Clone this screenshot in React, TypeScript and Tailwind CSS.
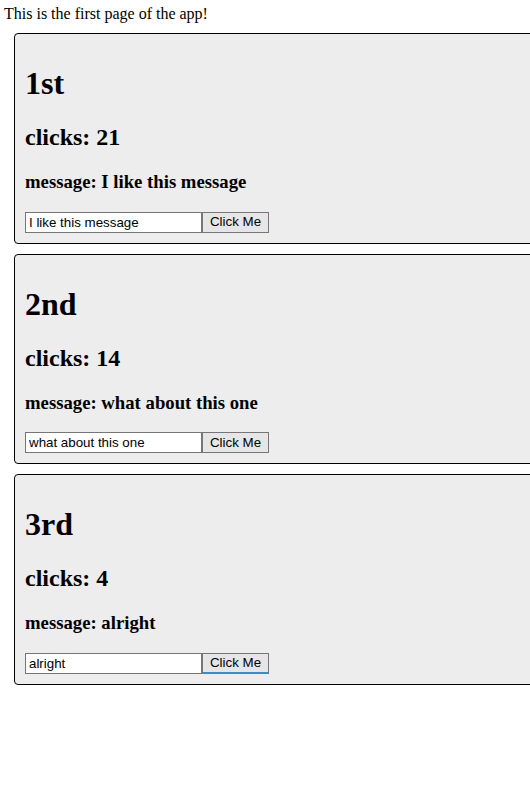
import { useState } from "react";

type Item = { title: string; clicks: number; message: string; focused?: boolean };

const items: Item[] = [
  { title: "1st", clicks: 21, message: "I like this message" },
  { title: "2nd", clicks: 14, message: "what about this one" },
  { title: "3rd", clicks: 4, message: "alright", focused: true },
];

const Card = ({ item }: { item: Item }) => {
  const [clicks, setClicks] = useState(item.clicks);
  const [text, setText] = useState(item.message);
  const [message, setMessage] = useState(item.message);

  return (
    <div className="ml-[10px] mt-[10px] w-[540px] p-[10px] border border-black rounded-[4px] bg-[#ededed] text-black">
      <h1 className="text-[32px] font-bold leading-[37px] my-[21px]">{item.title}</h1>
      <h2 className="text-[24px] font-bold leading-[28px] my-[20px]">clicks: {clicks}</h2>
      <h3 className="text-[18.72px] font-bold leading-[21px] mt-[19px] mb-[19.6px]">
        message: {message}
      </h3>
      <div className="flex items-center h-[21px]">
        <input
          className="w-[177px] h-[21px] px-[3px] border border-[#767676] bg-white text-[13.33px] font-['Liberation_Sans',Arial,sans-serif] outline-none"
          value={text}
          onChange={(e) => setText(e.target.value)}
        />
        <button
          className={
            item.focused
              ? "w-[67px] h-[21px] border border-[#767676] border-b-[#2f8fd8] border-b-2 bg-[#e6e6e6] text-[13.33px] font-['Liberation_Sans',Arial,sans-serif] leading-none"
              : "w-[67px] h-[21px] border border-[#767676] bg-[#e6e6e6] text-[13.33px] font-['Liberation_Sans',Arial,sans-serif] leading-none"
          }
          onClick={() => {
            setClicks(clicks + 1);
            setMessage(text);
          }}
        >
          Click Me
        </button>
      </div>
    </div>
  );
};

export default function App() {
  return (
    <div className="w-[530px] h-[799px] overflow-hidden bg-white font-['Liberation_Serif','Times_New_Roman',serif] pl-[4px] pt-[4px]">
      <div className="text-[16px] leading-[19px]">This is the first page of the app!</div>
      {items.map((item, index) => (
        <Card key={index} item={item} />
      ))}
    </div>
  );
}
